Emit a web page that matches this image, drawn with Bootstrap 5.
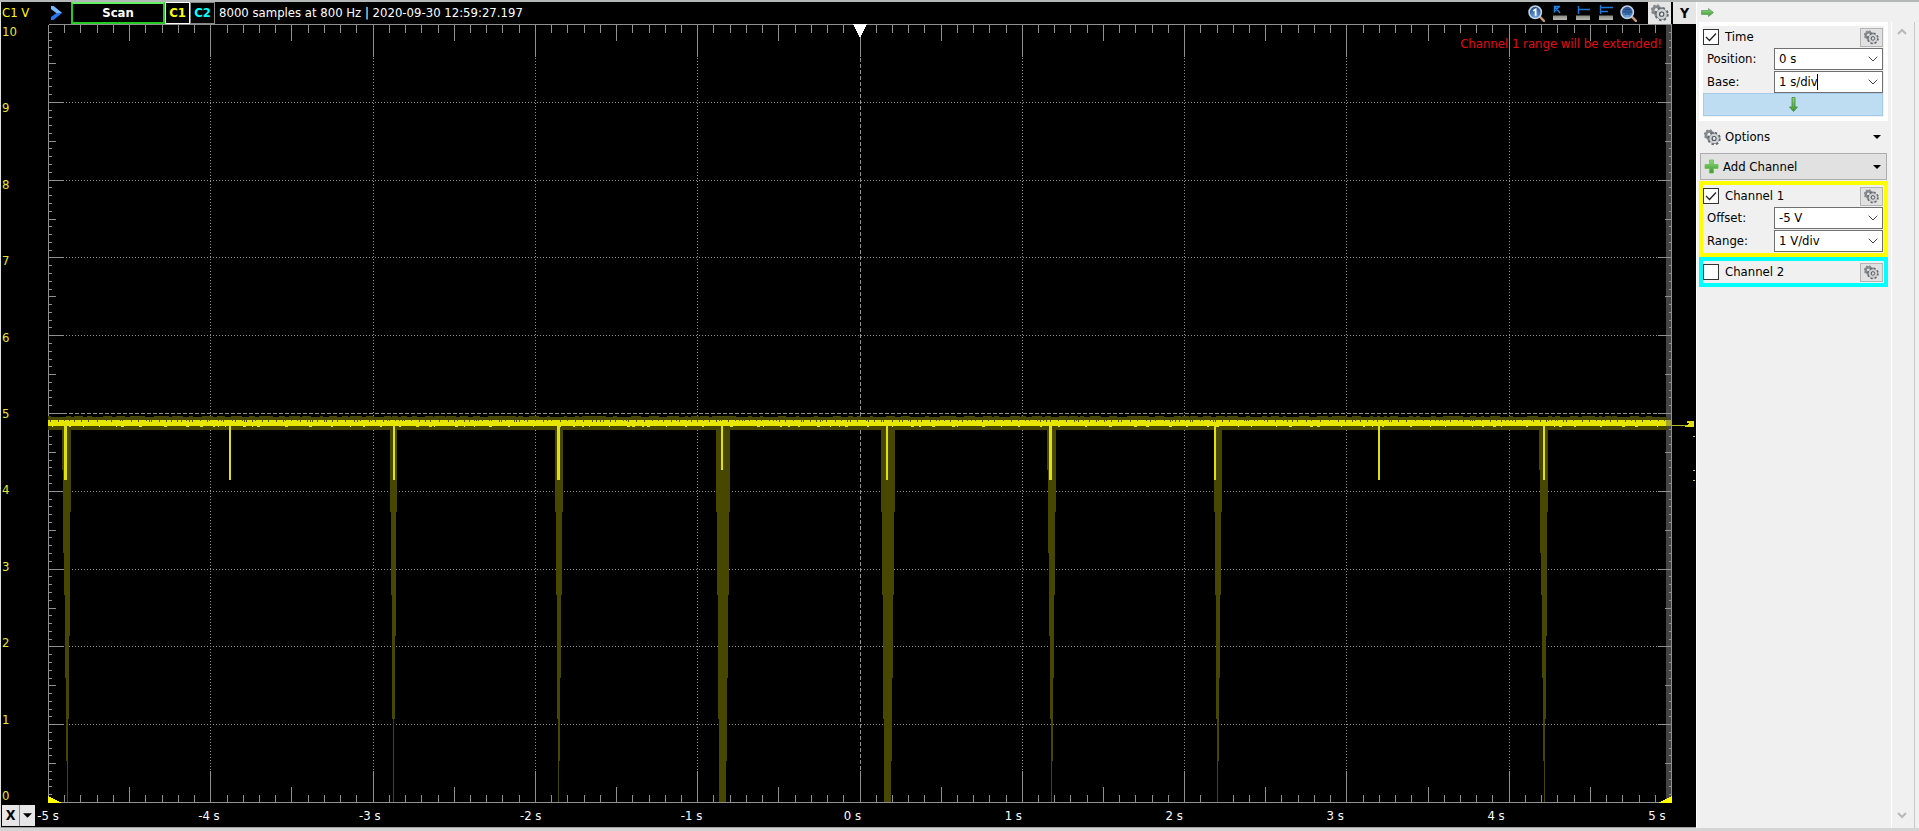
<!DOCTYPE html>
<html lang="en">
<head>
<meta charset="utf-8">
<meta name="viewport" content="width=device-width, initial-scale=1">
<title>Scope</title>
<link rel="stylesheet" href="https://cdn.jsdelivr.net/npm/bootstrap@5.3.0/dist/css/bootstrap.min.css">
<style>
  body { font: 13px/16px "DejaVu Sans Condensed", "DejaVu Sans", sans-serif; background: #f0f0f0; color: #000; }
  button, input, select { font: inherit; }
  .frame { border-top: 2px solid #b4b8b8; border-bottom: 3px solid #d4d4d4; }
  .scope { background: #000; min-width: 0; border-left: 1px solid #e0e0e0; border-bottom: 1px solid #a0a0a0; }
  .bar-top { height: 22px; color: #fff; padding-left: 1px; }
  .axis-unit { width: 47px; color: #ff0; }
  .bar-top button { height: 22px; padding: 0; background: #000; font-weight: bold; line-height: 16px; }
  .nav-btn { width: 22px; border: 0; text-align: left; }
  .scan-btn { width: 94px; color: #fff; border: 2px solid #2c2; border-top-color: #6e6; }
  .ch-btn { width: 25px; border: 1px solid #888; }
  .ch-one { color: #ff0; border-color: #fff; }
  .ch-two { color: #0ff; }
  .bar-top .tool-btn { width: 23px; border: 0; display: flex; align-items: center; justify-content: center; }
  .bar-top .tool-lit { background: #e6e6e6; color: #000; font-size: 14px; }
  .tool-pair { gap: 2px; }
  .labels-y { width: 47px; color: #e6e632; padding: 1px 0 0 1px; line-height: 14px; }
  .plot-edge { width: 24px; }
  .plot-box { min-width: 0; min-height: 0; }
  .plot-box svg { position: absolute; inset: 0; width: 100%; height: 100%; display: block; }
  .warn { position: absolute; top: 12px; right: 10px; color: #e40c10; }
  .bar-bottom { height: 24px; color: #fff; padding-left: 1px; }
  .x-btn { height: 21px; background: #e6e6e6; border: 0; padding: 0; font-weight: bold; font-size: 14px; }
  .x-main { width: 18px; border-right: 1px solid #888; }
  .x-drop { width: 15px; }
  .labels-x { padding: 2px 26px 0 0; }
  .labels-x span { width: 26px; text-align: center; white-space: nowrap; }
  .side { width: 223px; border-left: 1px solid #fff; }
  .side-head { height: 20px; padding-left: 4px; }
  .side-body { width: 191px; padding-left: 2px; }
  .group-box { border: 4px solid; background: #f0f0f0; padding: 1px 1px 1px 0; }
  .group-time { border-color: #fff; }
  .group-one { border-color: #ff0; margin-top: 1px; }
  .group-two { border-color: #0ff; }
  .head-row { height: 20px; }
  .head-row label { padding-left: 6px; }
  .field-row { height: 23px; }
  .field-row label { width: 71px; padding-left: 4px; }
  .side .form-check-input { width: 16px; height: 16px; margin: 0; border: 1px solid #333; border-radius: 0; background-color: #fff; }
  .side .form-check-input:checked { background-image: url("data:image/svg+xml,%3Csvg xmlns='http://www.w3.org/2000/svg' viewBox='0 0 16 16'%3E%3Cpath d='M3 8l3.5 3.5L13 4.500' fill='none' stroke='%23222' stroke-width='1.300'/%3E%3C/svg%3E"); background-size: 16px; }
  .field { width: 109px; height: 22px; padding: 0 20px 0 4px; border: 1px solid #707070; border-radius: 0; color: #000; background: #fff url("data:image/svg+xml,%3Csvg xmlns='http://www.w3.org/2000/svg' width='10' height='6'%3E%3Cpath d='M.7 .7L5 5 9.300 .7' fill='none' stroke='%23444'/%3E%3C/svg%3E") no-repeat right 4px center / 10px 6px; line-height: 20px; appearance: none; }
  .cursor { position: absolute; left: 43px; top: 3px; width: 1px; height: 16px; background: #000; }
  .gear-btn { width: 23px; height: 19px; padding: 0; border: 1px solid #b4b4b4; background: #e1e1e1; display: flex; align-items: center; justify-content: center; }
  .apply-btn { height: 23px; border: 1px solid #a5cbe8; background: #bedcf2; padding: 0; display: flex; align-items: center; justify-content: center; }
  .menu-btn { border: 1px solid transparent; background: none; padding: 0 6px 0 4px; text-align: left; }
  .opt-btn { height: 32px; width: 100%; }
  .add-btn { height: 27px; width: calc(100% - 2px); border-color: #adadad; background: #e1e1e1; margin-left: 1px; padding: 0 5px 0 3px; }
  .scroll-rail { width: 24px; margin-left: 3px; border-left: 1px solid #fff; border-right: 1px solid #c8c8c8; padding: 6px 3px 9px 0; }
  .scroll-rail button { border: 0; background: none; padding: 0; line-height: 0; }
</style>
</head>
<body>
<svg width="0" height="0" class="position-absolute" aria-hidden="true">
  <defs>
    <linearGradient id="leaf" x1="0" y1="0" x2="0" y2="1"><stop offset="0" stop-color="#8fd67e"/><stop offset="1" stop-color="#3a9a2c"/></linearGradient>
    <linearGradient id="rule" x1="0" y1="0" x2="0" y2="1"><stop offset="0" stop-color="#8a8a86"/><stop offset="1" stop-color="#bab8b0"/></linearGradient>
    <radialGradient id="glass" cx=".5" cy=".8" r=".8"><stop offset="0" stop-color="#6fa6e2"/><stop offset="1" stop-color="#1c4484"/></radialGradient>
    <symbol id="gear" viewBox="0 0 16 16">
      <g fill="none" stroke="#85898d">
        <circle cx="5" cy="5.500" r="3.200" stroke-width="2.600"/>
        <circle cx="5" cy="5.500" r="4.600" stroke-width="1.200" stroke-dasharray="1.800 1.810"/>
      </g>
      <g fill="none">
        <circle cx="9.500" cy="9" r="5.300" stroke="#62666a" stroke-width="2" stroke-dasharray="2.200 1.960"/>
        <circle cx="9.500" cy="9" r="4.700" stroke="#6c7074" stroke-width=".8"/>
        <circle cx="9.500" cy="9" r="3.300" stroke="#ced2d4" stroke-width="2.400"/>
        <circle cx="9.500" cy="9" r="1.900" stroke="#50545a" stroke-width="1"/>
      </g>
    </symbol>
    <symbol id="lens" viewBox="0 0 16 16">
      <path d="M11 11l4 4" stroke="#c49a78" stroke-width="2.400" stroke-linecap="round"/>
      <circle cx="6.800" cy="6.800" r="5.800" fill="url(#glass)" stroke="#c2d2e2" stroke-width="1.500"/>
    </symbol>
    <symbol id="caret" viewBox="0 0 8 4"><path d="M0 0h8L4 4z"/></symbol>
  </defs>
</svg>

<div class="frame d-flex vh-100">
  <main class="scope flex-fill d-flex flex-column">
    <div class="bar-top d-flex align-items-center">
      <span class="axis-unit">C1 V</span>
      <button class="nav-btn" type="button" aria-label="Expand"><svg width="14" height="16" viewBox="0 0 14 16"><path d="M2 1L4.500 1 13 8 4.500 15 2 15 2 12 7.500 8 2 4z" fill="#2a78f0"/><path d="M2 1L4.500 1 13 8 7.500 8 2 4z" fill="#7ab8fc"/></svg></button>
      <button class="scan-btn" type="button">Scan</button>
      <button class="ch-btn ch-one" type="button">C1</button>
      <button class="ch-btn ch-two" type="button">C2</button>
      <span class="ps-1 text-nowrap">8000 samples at 800 Hz | 2020-09-30 12:59:27.197</span>
      <div class="d-flex ms-auto">
        <button class="tool-btn" type="button" aria-label="Zoom 1"><svg width="17" height="17" viewBox="0 0 16 16"><use href="#lens"/><path d="M5 5.500L7.200 4V10" fill="none" stroke="#fff" stroke-width="1.600"/></svg></button>
        <button class="tool-btn" type="button" aria-label="Cursor"><svg width="16" height="16" viewBox="0 0 16 16"><path d="M1 10.500h14V15H1z" fill="url(#rule)"/><path d="M2.500 7.500V1.500H8M3 2l5 6M3 6l4-4" fill="none" stroke="#1c84e4" stroke-width="1.400"/></svg></button>
        <button class="tool-btn" type="button" aria-label="X cursors"><svg width="16" height="16" viewBox="0 0 16 16"><path d="M1 10.500h14V15H1z" fill="url(#rule)"/><path d="M3.500 1v8M3.500 4.500H15" fill="none" stroke="#1c78d8" stroke-width="1.400"/></svg></button>
        <button class="tool-btn" type="button" aria-label="Y cursors"><svg width="16" height="16" viewBox="0 0 16 16"><path d="M1 10.500h14V15H1z" fill="url(#rule)"/><path d="M2.500 0v9M2.500 2.500H15M2.500 6.500H10" fill="none" stroke="#1c78d8" stroke-width="1.400"/></svg></button>
        <button class="tool-btn me-2" type="button" aria-label="Zoom fit"><svg width="17" height="17" viewBox="0 0 16 16"><use href="#lens"/><path d="M3 6.500h8M4.500 4.500h5M4.500 8.500h5" stroke="#123a70" stroke-width="1"/></svg></button>
        <div class="tool-pair d-flex">
          <button class="tool-btn tool-lit" type="button" aria-label="Settings"><svg width="18" height="18"><use href="#gear"/></svg></button>
          <button class="tool-btn tool-lit" type="button">Y</button>
        </div>
      </div>
    </div>

    <div class="d-flex flex-fill">
      <div class="labels-y d-flex flex-column-reverse justify-content-between" id="labelsY"></div>
      <div class="plot-box position-relative flex-fill">
        <svg id="plot" role="img" aria-label="Channel 1 trace" shape-rendering="crispEdges" overflow="visible"></svg>
        <span class="warn">Channel 1 range will be extended!</span>
      </div>
      <div class="plot-edge"></div>
    </div>

    <div class="bar-bottom d-flex align-items-center">
      <button class="x-btn x-main" type="button">X</button>
      <button class="x-btn x-drop" type="button" aria-label="X menu"><svg width="9" height="5" class="d-block mx-auto"><use href="#caret"/></svg></button>
      <div class="labels-x d-flex flex-fill justify-content-between" id="labelsX"></div>
    </div>
  </main>

  <aside class="side d-flex flex-column">
    <div class="side-head d-flex align-items-center"><svg width="13" height="9" viewBox="0 0 13 9"><path d="M.5 2.500h7V.5L12.500 4.500l-5 4V6.500h-7z" fill="url(#leaf)" stroke="#5c9a5c" stroke-width=".7"/></svg></div>
    <div class="d-flex flex-fill">
      <form class="side-body">
        <div class="group-box group-time">
          <div class="head-row d-flex align-items-center">
            <input class="form-check-input" type="checkbox" id="time" checked><label for="time">Time</label>
            <button class="gear-btn ms-auto" type="button" aria-label="Time settings"><svg width="15" height="15"><use href="#gear"/></svg></button>
          </div>
          <div class="field-row d-flex align-items-center"><label for="pos">Position:</label><select class="field" id="pos"><option>0 s</option></select></div>
          <div class="field-row d-flex align-items-center"><label for="base">Base:</label><span class="position-relative"><input class="field d-block" type="text" id="base" value="1 s/div"><span class="cursor"></span></span></div>
          <button class="apply-btn w-100" type="button" aria-label="Collapse"><svg width="9" height="15" viewBox="0 0 9 15"><path d="M3 .5h3v9.500h2.500L4.500 14.500.5 10H3z" fill="url(#leaf)" stroke="#3f8a3a" stroke-width=".8"/></svg></button>
        </div>
        <button class="menu-btn opt-btn d-flex align-items-center" type="button"><svg width="17" height="17" class="me-1"><use href="#gear"/></svg>Options<svg width="8" height="4" class="ms-auto"><use href="#caret"/></svg></button>
        <button class="menu-btn add-btn d-flex align-items-center" type="button"><svg width="15" height="15" viewBox="0 0 15 15" class="me-1"><path d="M5.500 1h4v4.500H14v4H9.500V14h-4V9.500H1v-4h4.500z" fill="url(#leaf)" stroke="#6cc04a" stroke-width=".8"/></svg>Add Channel<svg width="8" height="4" class="ms-auto"><use href="#caret"/></svg></button>
        <div class="group-box group-one">
          <div class="head-row d-flex align-items-center">
            <input class="form-check-input" type="checkbox" id="ch1" checked><label for="ch1">Channel 1</label>
            <button class="gear-btn ms-auto" type="button" aria-label="Channel 1 settings"><svg width="15" height="15"><use href="#gear"/></svg></button>
          </div>
          <div class="field-row d-flex align-items-center"><label for="off">Offset:</label><select class="field" id="off"><option>-5 V</option></select></div>
          <div class="field-row d-flex align-items-center"><label for="rng">Range:</label><select class="field" id="rng"><option>1 V/div</option></select></div>
        </div>
        <div class="group-box group-two">
          <div class="head-row d-flex align-items-center">
            <input class="form-check-input" type="checkbox" id="ch2"><label for="ch2">Channel 2</label>
            <button class="gear-btn ms-auto" type="button" aria-label="Channel 2 settings"><svg width="15" height="15"><use href="#gear"/></svg></button>
          </div>
        </div>
      </form>
      <div class="scroll-rail d-flex flex-column justify-content-between align-items-center">
        <button type="button" aria-label="Scroll up"><svg width="10" height="7" viewBox="0 0 10 7"><path d="M1 6l4-4 4 4" fill="none" stroke="#b8b8b8" stroke-width="2"/></svg></button>
        <button type="button" aria-label="Scroll down"><svg width="10" height="7" viewBox="0 0 10 7"><path d="M1 1l4 4 4-4" fill="none" stroke="#b8b8b8" stroke-width="2"/></svg></button>
      </div>
    </div>
  </aside>
</div>

<script src="https://cdn.jsdelivr.net/npm/bootstrap@5.3.0/dist/js/bootstrap.bundle.min.js"></script>
<script>
  const plot = document.getElementById('plot');
  const label = text => `<span>${text}</span>`;
  document.getElementById('labelsY').innerHTML = Array.from({ length: 11 }, (_, v) => label(v)).join('');
  document.getElementById('labelsX').innerHTML = Array.from({ length: 11 }, (_, i) => label(`${i - 5} s`)).join('');

  // t: seconds from the left edge; v: bottom of the bright spike in volts; w: its width;
  // noise: [left, right] of the dim envelope in pixels around t, end: its [left, right] at 0 V
  const pulses = [
    { t: .1, v: 4.14, w: 3, noise: [-2, 7], end: [3, 4] },
    { t: 1.115, v: 4.14, w: 2 },
    { t: 2.125, v: 4.14, w: 2, noise: [-3, 4], end: [0, 1] },
    { t: 3.135, v: 4.14, w: 3, noise: [-2, 6], end: [1, 2] },
    { t: 4.145, v: 4.27, w: 2, noise: [-5, 9], end: [-2, 5] },
    { t: 5.165, v: 4.14, w: 2, noise: [-5, 9], end: [-2, 5] },
    { t: 6.17, v: 4.14, w: 3, noise: [-2, 7], end: [2, 3] },
    { t: 7.185, v: 4.14, w: 2, noise: [0, 8], end: [3, 4] },
    { t: 8.195, v: 4.14, w: 2 },
    { t: 9.21, v: 4.14, w: 2, noise: [-4, 5], end: [1, 2] }
  ];

  function draw() {
    const W = plot.clientWidth - 1, H = plot.clientHeight - 1;
    let seed = 7;
    const rnd = () => (seed = (seed * 16807) % 2147483647) / 2147483647;
    const X = t => Math.round(t * W / 10), Y = v => Math.round((10 - v) * H / 10);
    const rect = (x, y, w, h, f) => `<rect x="${x}" y="${y}" width="${w}" height="${h}" fill="${f}"/>`;
    const line = (x1, y1, x2, y2, dash) => `<path d="M${x1 + .5} ${y1 + .5}L${x2 + .5} ${y2 + .5}" stroke="#909090" ${dash ? `stroke-dasharray="${dash}"` : ''}/>`;
    let s = rect(W - 5, 0, 6, H, '#444');
    for (let i = 1; i < 10; i++) {
      const dash = i === 5 ? '4 2' : '1 2';
      s += line(X(i), 33, X(i), H - 32, dash) + line(14, Y(i), W - 14, Y(i), dash);
    }
    for (let i = 1; i < 100; i++) {
      const kind = i % 10 === 0 ? 2 : i % 5 === 0 ? 1 : 0;
      const v = [8, 16, 32][kind], h = [3, 7, 14][kind];
      const x = X(i / 10), y = Y(i / 10);
      s += line(x, 0, x, v) + line(x, H - v, x, H) + line(0, y, h, y) + line(W - h, y, W, y);
    }
    s += line(0, 0, W, 0) + line(0, 0, 0, H) + line(W, 0, W, H) + line(0, H, W, H);

    const top = Y(4.9) - 1;
    s += rect(0, top - 3, W - 4, 13, '#474700');
    for (let x = 0; x < W - 20; x += 6 + Math.floor(rnd() * 14)) s += rect(x, top - 4, 3 + Math.floor(rnd() * 9), 1, '#474700');
    for (const p of pulses) if (p.noise) {
      const x = X(p.t), n = 9, y0 = top + 8, step = (H - y0) / n;
      for (let k = 0; k < n; k++) {
        const q = k / (n - 1);
        const a = Math.round(x + p.noise[0] + (p.end[0] - p.noise[0]) * q);
        const b = Math.round(x + p.noise[1] + (p.end[1] - p.noise[1]) * q);
        s += rect(a, Math.round(y0 + k * step), b - a, Math.ceil(step), '#474700');
      }
    }
    s += rect(0, top, W, 6, '#e6e600');
    for (let x = 2; x < W - 4; x += 2 + Math.floor(rnd() * 8)) s += rect(x, top, 1, 1 + Math.floor(rnd() * 2), '#575700');
    for (let x = 4; x < W - 8; x += 5 + Math.floor(rnd() * 24)) s += rect(x, top + 6, 1 + Math.floor(rnd() * 3), 1, '#e6e600');
    for (const p of pulses) s += rect(X(p.t), top + 5, p.w, Y(p.v) - top - 5, '#e0e010');
    s += rect(W - 5, top, 6, 6, '#a6a632');

    // trigger marker, range corners and the channel marker in the right margin
    s += `<path d="M${X(5) - 7} 0h14l-7 14z" fill="#fff"/>`;
    s += `<path d="M0 ${H - 6}L14 ${H + 1}H0zM${W + 1} ${H - 6}L${W - 13} ${H + 1}h14z" fill="#ff0"/>`;
    s += rect(W + 1, top + 5, 17, 1, '#b4b432') + `<path d="M${W + 12} ${top + 7}h11v-6h-7v2h2l-2 3z" fill="#e0e010"/>`;
    for (const d of [16, 50, 60]) s += rect(W + 22, top + d, 2, 1, '#c8c832');
    plot.innerHTML = s;
  }
  draw();
  addEventListener('resize', draw);
</script>
</body>
</html>
